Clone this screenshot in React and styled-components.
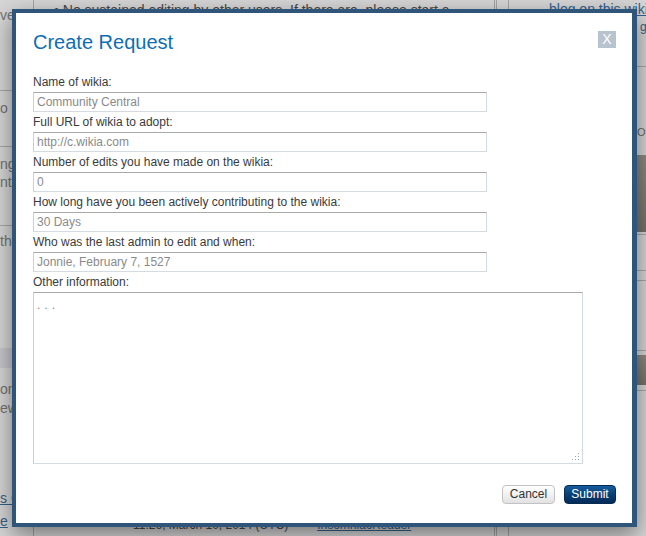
import React from 'react';
import styled, { createGlobalStyle } from 'styled-components';

const GlobalStyle = createGlobalStyle`
  html, body {
    margin: 0;
    padding: 0;
    background: #fff;
  }
  body {
    font-family: "Liberation Sans", Arial, sans-serif;
  }
`;

const fields = [
  { label: 'Name of wikia:', placeholder: 'Community Central' },
  { label: 'Full URL of wikia to adopt:', placeholder: 'http://c.wikia.com' },
  { label: 'Number of edits you have made on the wikia:', placeholder: '0' },
  { label: 'How long have you been actively contributing to the wikia:', placeholder: '30 Days' },
  { label: 'Who was the last admin to edit and when:', placeholder: 'Jonnie, February 7, 1527' },
];

// faded bits of the wiki page that peek out around the dialog
const leftBits = [
  { kind: 'text', gap: 6, text: 've' },
  { kind: 'rule', gap: 66 },
  { kind: 'text', gap: 8, text: 'o' },
  { kind: 'rule', gap: 29 },
  { kind: 'text', gap: 8, text: 'ng' },
  { kind: 'text', gap: 0, text: 'nt?' },
  { kind: 'rule', gap: 34 },
  { kind: 'text', gap: 6, text: 'the' },
  { kind: 'band', gap: 98 },
  { kind: 'text', gap: 12, text: 'on' },
  { kind: 'text', gap: 1, text: 'ew' },
  { kind: 'link', gap: 72, text: 's C' },
  { kind: 'link', gap: 5, text: 'e' },
];

const App = () => {
  return (
    <>
      <GlobalStyle />
      <Page>
        <LeftCol>
          {leftBits.map((b, i) => {
            if (b.kind === 'rule') return <Rule key={i} $gap={b.gap} />;
            if (b.kind === 'band') return <Band key={i} $gap={b.gap} />;
            return (
              <Frag key={i} $gap={b.gap} $link={b.kind === 'link'}>
                {b.text}
              </Frag>
            );
          })}
        </LeftCol>
        <MainCol>
          <Bullet>• No sustained editing by other users. If there are, please start a</Bullet>
          <Signature>
            <span>11:26, March 10, 2014 (UTC)</span>
            <PageLink>InsomniacReader</PageLink>
          </Signature>
        </MainCol>
        <Rail>
          <PageLink>blog on this wikia</PageLink>
          <RailLine>
            <PageLink>guide</PageLink>
          </RailLine>
          <RailRule $gap={30} />
          <RailText>ON THE WIKI</RailText>
          <Thumb $gap={14} $h={77} />
          <RailRule $gap={2} />
          <RailRule $gap={35} />
          <RailRule $gap={9} />
          <RailRule $gap={69} />
          <Thumb $gap={4} $h={30} />
          <RailRule $gap={5} />
        </Rail>
        <Backdrop />
        <Modal>
          <Header>
            <Title>Create Request</Title>
            <CloseButton type="button">X</CloseButton>
          </Header>
          <Form>
            {fields.map((f) => (
              <Field key={f.label}>
                <Label>{f.label}</Label>
                <Input type="text" placeholder={f.placeholder} />
              </Field>
            ))}
            <Field>
              <Label>Other information:</Label>
              <AreaBox>
                <TextArea placeholder="..." />
                <Grip width="9" height="9" viewBox="0 0 9 9">
                  <rect x="7" y="1" width="1" height="1" />
                  <rect x="4" y="4" width="1" height="1" />
                  <rect x="7" y="4" width="1" height="1" />
                  <rect x="1" y="7" width="1" height="1" />
                  <rect x="4" y="7" width="1" height="1" />
                  <rect x="7" y="7" width="1" height="1" />
                </Grip>
              </AreaBox>
            </Field>
          </Form>
          <Footer>
            <Button type="button">Cancel</Button>
            <Button type="button" $primary>
              Submit
            </Button>
          </Footer>
        </Modal>
      </Page>
    </>
  );
};

export default App;

const Page = styled.div`
  position: relative;
  display: flex;
  width: 646px;
  height: 536px;
  overflow: hidden;
  background: #fff;
  color: #3a3a3a;
  font-size: 14px;
`;

const LeftCol = styled.div`
  display: flex;
  flex-direction: column;
  width: 33px;
  flex-shrink: 0;
  border-right: 1px solid #c4c4c4;
  overflow: hidden;
  white-space: nowrap;
`;

const Frag = styled.div`
  margin-top: ${(p) => p.$gap}px;
  line-height: 18px;
  color: ${(p) => (p.$link ? '#3d74a8' : '#8a8a8a')};
  text-decoration: ${(p) => (p.$link ? 'underline' : 'none')};
`;

const Rule = styled.div`
  margin-top: ${(p) => p.$gap}px;
  height: 1px;
  background: #c8c8c8;
`;

const Band = styled.div`
  margin-top: ${(p) => p.$gap}px;
  height: 20px;
  background: #ececf4;
`;

const MainCol = styled.div`
  display: flex;
  flex-direction: column;
  justify-content: space-between;
  width: 460px;
  flex-shrink: 0;
  border-right: 3px double #c4c4c4;
  white-space: nowrap;
  overflow: hidden;
`;

const Bullet = styled.div`
  padding: 1px 0 0 20px;
  line-height: 18px;
  color: #555;
`;

const Signature = styled.div`
  display: flex;
  gap: 29px;
  padding: 0 0 4px 99px;
  font-size: 12px;
  line-height: 14px;
  color: #555;
`;

const PageLink = styled.span`
  color: #3d74a8;
  text-decoration: underline;
`;

const Rail = styled.div`
  display: flex;
  flex-direction: column;
  margin-left: 11px;
  padding-left: 40px;
  flex: 1;
  border-left: 1px solid #c4c4c4;
  white-space: nowrap;
  line-height: 18px;
`;

const RailLine = styled.div`
  padding-left: 91px;
  font-size: 12px;
`;

const RailRule = styled.div`
  margin: ${(p) => p.$gap}px -40px 0;
  height: 1px;
  background: #c8c8c8;
`;

const RailText = styled.div`
  margin-top: 56px;
  padding-left: 88px;
  font-size: 11px;
  color: #777;
`;

const Thumb = styled.div`
  margin: ${(p) => p.$gap}px -40px 0;
  height: ${(p) => p.$h}px;
  background: linear-gradient(180deg, #a9a39b, #8c8880);
`;

const Backdrop = styled.div`
  position: absolute;
  inset: 0;
  background: rgba(0, 0, 0, 0.16);
`;

const Modal = styled.div`
  position: absolute;
  left: 12px;
  top: 9px;
  box-sizing: border-box;
  width: 625px;
  height: 518px;
  display: flex;
  flex-direction: column;
  padding: 17px 16px 0 17px;
  background: #fff;
  border: 4px solid #30557a;
  border-right-width: 5px;
  box-shadow: 0 8px 22px rgba(0, 0, 0, 0.45);
`;

const Header = styled.div`
  display: flex;
  justify-content: space-between;
  align-items: flex-start;
`;

const Title = styled.h1`
  margin: 0;
  font-size: 20px;
  line-height: 24px;
  font-weight: normal;
  color: #0f6eb3;
`;

const CloseButton = styled.button`
  width: 18px;
  height: 17px;
  margin-top: 1px;
  padding: 0;
  border: none;
  background: #b7c3cf;
  color: #fff;
  font-family: "Liberation Sans", Arial, sans-serif;
  font-size: 14px;
  line-height: 17px;
  cursor: pointer;
`;

const Form = styled.div`
  display: flex;
  flex-direction: column;
  margin-top: 18px;
`;

const Field = styled.div`
  display: flex;
  flex-direction: column;
  align-items: flex-start;
`;

const Label = styled.label`
  padding-top: 1px;
  font-size: 12px;
  line-height: 19px;
  color: #3a3a3a;
`;

const fieldLook = `
  box-sizing: border-box;
  margin: 0;
  padding: 0 3px;
  border: 1px solid #d4dbe2;
  border-top-color: #a9a9a9;
  border-left-color: #c9cfd6;
  background: #fff;
  font-family: "Liberation Sans", Arial, sans-serif;
  font-size: 12px;
  color: #3a3a3a;
  outline: none;

  &::placeholder {
    color: #8a8a8a;
    opacity: 1;
  }
`;

const Input = styled.input`
  ${fieldLook}
  width: 454px;
  height: 20px;
`;

const AreaBox = styled.div`
  position: relative;
  width: 550px;
  height: 172px;
`;

const TextArea = styled.textarea`
  ${fieldLook}
  display: block;
  width: 100%;
  height: 100%;
  padding: 5px 3px;
  resize: none;
  line-height: 14px;
  letter-spacing: 4px;
`;

const Grip = styled.svg`
  position: absolute;
  right: 3px;
  bottom: 3px;
  fill: #9aa2aa;
`;

const Footer = styled.div`
  display: flex;
  justify-content: flex-end;
  gap: 9px;
  margin-top: 21px;
`;

const Button = styled.button`
  box-sizing: border-box;
  width: ${(p) => (p.$primary ? '52px' : '53px')};
  height: 19px;
  padding: 0;
  border: 1px solid ${(p) => (p.$primary ? '#062b52' : '#c2c2c2')};
  border-radius: 4px;
  background: ${(p) =>
    p.$primary
      ? 'linear-gradient(180deg, #165d9e 0%, #0a3f75 50%, #012a58 100%)'
      : 'linear-gradient(180deg, #ffffff 0%, #f1f1f1 50%, #e2e2e2 100%)'};
  color: ${(p) => (p.$primary ? '#fff' : '#333')};
  font-family: "Liberation Sans", Arial, sans-serif;
  font-size: 12px;
  line-height: 17px;
  cursor: pointer;
`;
